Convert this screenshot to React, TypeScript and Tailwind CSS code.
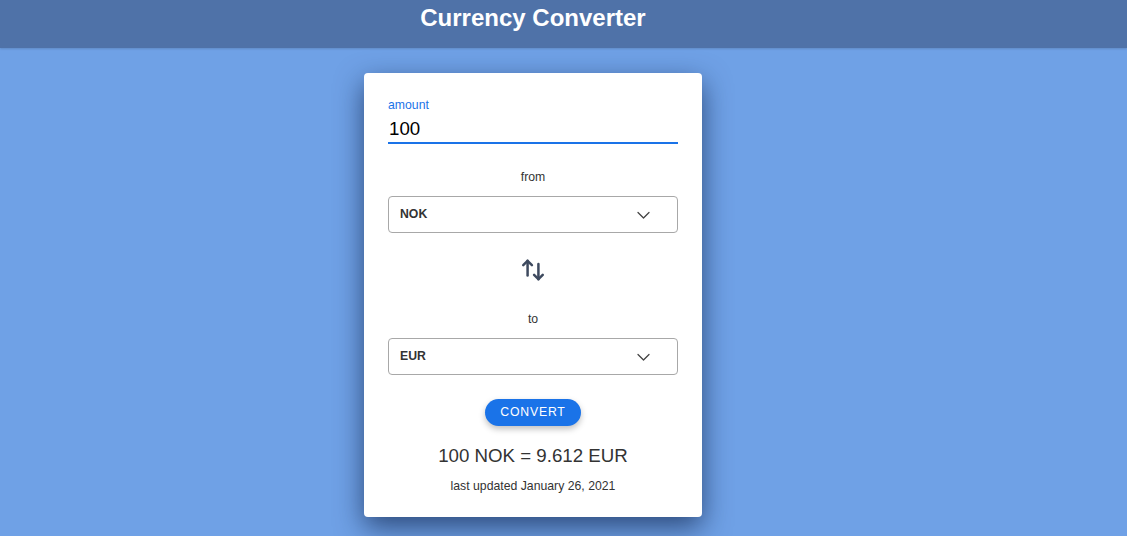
import { useState } from 'react';

function Chevron() {
  return (
    <svg width="13" height="8" viewBox="0 0 13 8" fill="none" stroke="#444" strokeWidth="1.25" strokeLinecap="round" strokeLinejoin="round">
      <path d="M1 1.5l5.5 5.5 5.5-5.5" />
    </svg>
  );
}

function CurrencySelect({ value }: { value: string }) {
  return (
    <div className="flex h-[37px] w-full items-center justify-between rounded border border-[#a8a8a8] pl-[11px] pr-[27px]">
      <span className="text-[12.25px] font-bold text-[#333]">{value}</span>
      <Chevron />
    </div>
  );
}

export default function App() {
  const [amount, setAmount] = useState('100');

  return (
    <div className="min-h-screen bg-[#6fa1e6] font-['Liberation_Sans',Arial,sans-serif]">
      <header className="flex h-12 justify-center bg-[#4f72a8] pr-[61px] shadow-[0_1px_2px_rgba(0,0,0,0.15)]">
        <h1 className="text-[24px] font-bold leading-[36px] text-white">Currency Converter</h1>
      </header>

      <main className="flex justify-center pr-[61px] pt-[25px]">
        <div className="flex w-[338px] flex-col rounded bg-white px-6 pb-[21px] pt-6 shadow-[0_10px_28px_rgba(15,35,75,0.7)]">
          <label className="text-[12.25px] leading-4 text-[#1a73e8]">amount</label>
          <input
            value={amount}
            onChange={(e) => setAmount(e.target.value)}
            className="mt-[3px] h-[28px] w-full border-b-2 border-[#1a73e8] pl-px text-[18.7px] text-black outline-none"
          />

          <p className="mt-[23px] text-center text-[12.25px] leading-5 text-[#333]">from</p>
          <div className="mt-[9px]">
            <CurrencySelect value="NOK" />
          </div>

          <div className="mt-[24px] flex justify-center">
            <svg width="26" height="26" viewBox="0 0 24 24" fill="none" stroke="#3e4a5f" strokeWidth="2.3" strokeLinecap="round" strokeLinejoin="round">
              <path d="M7 17V3.5" />
              <path d="M3 7.5l4-4 4 4" />
              <path d="M17 6.5v14" />
              <path d="M13 16.5l4 4 4-4" />
            </svg>
          </div>

          <p className="mt-[26px] text-center text-[12.25px] leading-5 text-[#333]">to</p>
          <div className="mt-[9px]">
            <CurrencySelect value="EUR" />
          </div>

          <div className="mt-6 flex justify-center">
            <button className="h-[27px] w-[96px] rounded-full bg-[#1a73e8] text-[12.25px] tracking-[0.8px] text-white shadow-[0_3px_6px_rgba(0,0,0,0.25)]">
              CONVERT
            </button>
          </div>

          <p className="mt-4 text-center text-[18.7px] leading-7 text-[#333]">100 NOK = 9.612 EUR</p>
          <p className="mt-[6px] text-center text-[12.25px] leading-5 text-[#333]">last updated January 26, 2021</p>
        </div>
      </main>
    </div>
  );
}
